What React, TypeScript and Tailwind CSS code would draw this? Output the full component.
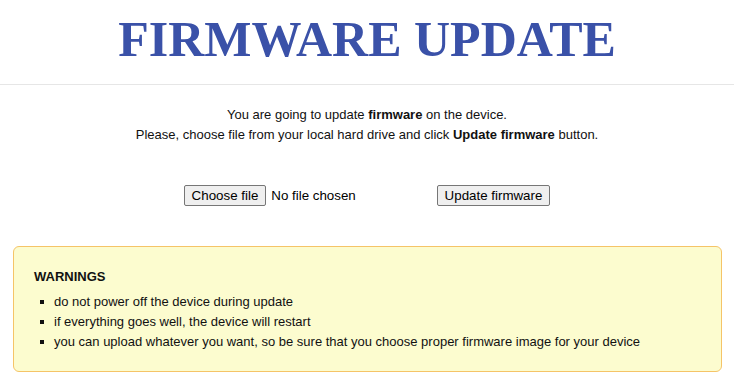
import React from "react";

export default function App() {
  const items = [
    "do not power off the device during update",
    "if everything goes well, the device will restart",
    "you can upload whatever you want, so be sure that you choose proper firmware image for your device",
  ];
  return (
    <div className="w-[734px] h-[384px] bg-white text-[#111] font-['Liberation_Sans',Arial,sans-serif] overflow-hidden">
      <header className="h-[85px] border-b border-[#e6e6e6] flex justify-center pt-[14px]">
        <h1 className="font-['Liberation_Serif','Times_New_Roman',serif] font-bold text-[50px] leading-none text-[#3a51a8]">
          FIRMWARE UPDATE
        </h1>
      </header>
      <div className="pt-[20px] text-center text-[13px] leading-[20px]">
        <p>
          You are going to update <b>firmware</b> on the device.
        </p>
        <p>
          Please, choose file from your local hard drive and click <b>Update firmware</b> button.
        </p>
      </div>
      <div className="mt-[40px] flex justify-center text-[13.33px] leading-[17px]">
        <div className="w-[253px] flex items-center">
          <button className="h-[21px] px-[7px] bg-[#efefef] border border-[#767676] rounded-[2px] text-black">
            Choose file
          </button>
          <span className="ml-[5px] text-black">No file chosen</span>
        </div>
        <button className="h-[21px] px-[7px] bg-[#efefef] border border-[#767676] rounded-[2px] text-black">
          Update firmware
        </button>
      </div>
      <div className="ml-[13px] mr-[12px] mt-[40px] h-[126px] border border-[#f5c468] bg-[#fcfccf] rounded-[6px] pt-[20px] pl-[20px] text-[13px] leading-[20px] text-[#111]">
        <div className="font-bold">WARNINGS</div>
        <ul className="mt-[5px]">
          {items.map((t) => (
            <li key={t} className="flex items-center">
              <span className="ml-[6px] w-[4px] h-[4px] bg-[#111]" />
              <span className="ml-[10px]">{t}</span>
            </li>
          ))}
        </ul>
      </div>
    </div>
  );
}
